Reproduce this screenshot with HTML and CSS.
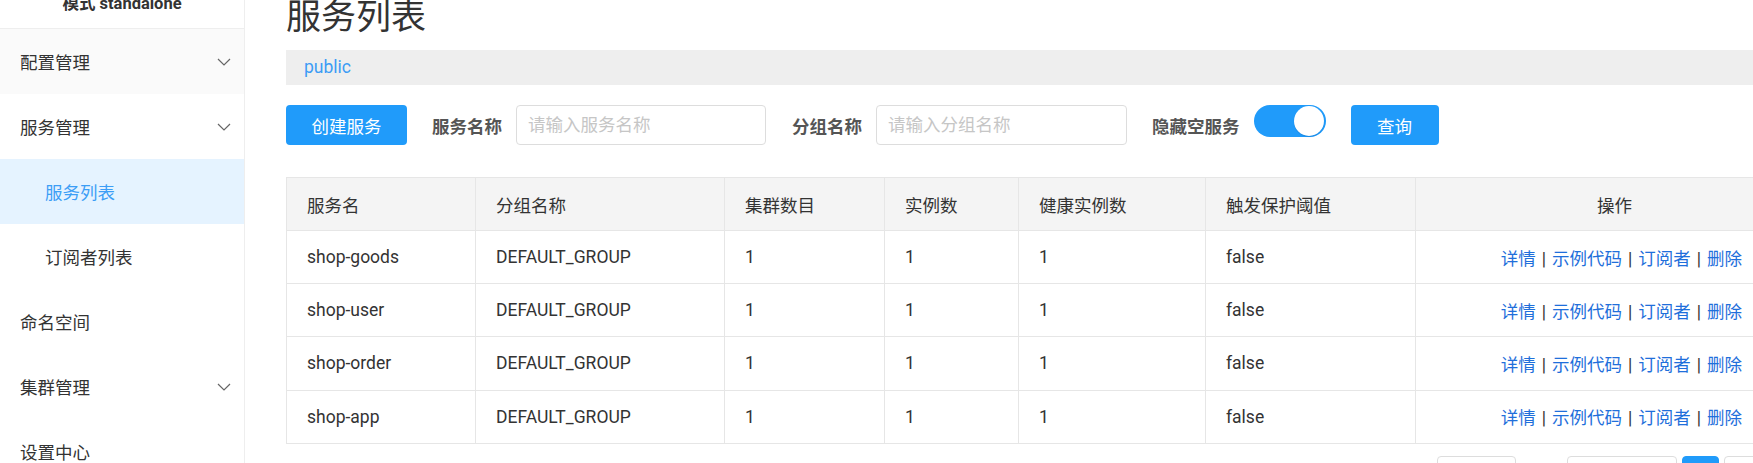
FILE: index.html
```html
<!DOCTYPE html>
<html lang="zh-CN">
<head>
<meta charset="utf-8">
<title>服务列表</title>
<link rel="stylesheet" href="styles.css">
</head>
<body>
<div class="app">
  <aside class="sidebar">
    <div class="brand"><span>模式 standalone</span></div>
    <div class="nav-item hover"><span>配置管理</span><svg class="chev" width="14" height="8" viewBox="0 0 14 8"><path d="M1 1 L7 7 L13 1" fill="none" stroke="#666" stroke-width="1.2"/></svg></div>
    <div class="nav-item"><span>服务管理</span><svg class="chev" width="14" height="8" viewBox="0 0 14 8"><path d="M1 1 L7 7 L13 1" fill="none" stroke="#666" stroke-width="1.2"/></svg></div>
    <div class="nav-item sub active"><span>服务列表</span></div>
    <div class="nav-item sub"><span>订阅者列表</span></div>
    <div class="nav-item"><span>命名空间</span></div>
    <div class="nav-item"><span>集群管理</span><svg class="chev" width="14" height="8" viewBox="0 0 14 8"><path d="M1 1 L7 7 L13 1" fill="none" stroke="#666" stroke-width="1.2"/></svg></div>
    <div class="nav-item"><span>设置中心</span></div>
  </aside>
  <main class="main">
    <h1 class="title">服务列表</h1>
    <div class="ns-bar">public</div>
    <div class="toolbar">
      <button class="btn create">创建服务</button>
      <span class="label">服务名称</span>
      <input class="input in1" placeholder="请输入服务名称">
      <span class="label">分组名称</span>
      <input class="input in2" placeholder="请输入分组名称">
      <span class="label">隐藏空服务</span>
      <span class="switch"><span class="knob"></span></span>
      <button class="btn query">查询</button>
    </div>
    <table class="grid">
      <colgroup>
        <col class="c1"><col class="c2"><col class="c3"><col class="c4"><col class="c5"><col class="c6"><col class="c7">
      </colgroup>
      <thead>
        <tr><th>服务名</th><th>分组名称</th><th>集群数目</th><th>实例数</th><th>健康实例数</th><th>触发保护阈值</th><th class="ops-h">操作</th></tr>
      </thead>
      <tbody>
        <tr><td>shop-goods</td><td>DEFAULT_GROUP</td><td>1</td><td>1</td><td>1</td><td>false</td><td class="ops"><a>详情</a><span class="sep">|</span><a>示例代码</a><span class="sep">|</span><a>订阅者</a><span class="sep">|</span><a>删除</a></td></tr>
        <tr><td>shop-user</td><td>DEFAULT_GROUP</td><td>1</td><td>1</td><td>1</td><td>false</td><td class="ops"><a>详情</a><span class="sep">|</span><a>示例代码</a><span class="sep">|</span><a>订阅者</a><span class="sep">|</span><a>删除</a></td></tr>
        <tr><td>shop-order</td><td>DEFAULT_GROUP</td><td>1</td><td>1</td><td>1</td><td>false</td><td class="ops"><a>详情</a><span class="sep">|</span><a>示例代码</a><span class="sep">|</span><a>订阅者</a><span class="sep">|</span><a>删除</a></td></tr>
        <tr><td>shop-app</td><td>DEFAULT_GROUP</td><td>1</td><td>1</td><td>1</td><td>false</td><td class="ops"><a>详情</a><span class="sep">|</span><a>示例代码</a><span class="sep">|</span><a>订阅者</a><span class="sep">|</span><a>删除</a></td></tr>
      </tbody>
    </table>
    <div class="pager">
      <span class="pbox p1"></span>
      <span class="pbox p2"></span>
      <span class="pbox p3 cur"></span>
      <span class="pbox p4"></span>
    </div>
  </main>
</div>
</body>
</html>
```
FILE: styles.css
```css
html, body {
  margin: 0;
  padding: 0;
}
body {
  width: 1753px;
  height: 463px;
  overflow: hidden;
  background: #fff;
  font-family: Roboto, "Noto Sans CJK SC", sans-serif;
  font-size: 17.5px;
  color: #333;
}
.app {
  display: flex;
  align-items: flex-start;
  width: 1800px;
}
.sidebar {
  flex: none;
  width: 245px;
  height: 463px;
  box-sizing: border-box;
  border-right: 1px solid #eee;
}
.brand {
  height: 28px;
  border-bottom: 1px solid #eee;
  overflow: hidden;
  text-align: center;
  font-weight: bold;
  font-size: 16.5px;
  color: #333;
}
.brand span {
  display: block;
  line-height: 16px;
  margin-top: -4px;
}
.nav-item {
  height: 65px;
  display: flex;
  align-items: center;
  justify-content: space-between;
  padding: 0 13px 0 20px;
  color: #333;
}
.nav-item.sub {
  padding-left: 45px;
}
.nav-item.hover {
  background: #fafafa;
}
.nav-item.active {
  background: #e5f3ff;
  color: #3c9ef6;
}
.chev {
  display: block;
}
.main {
  flex: none;
  width: 1477px;
  padding-left: 41px;
}
.title {
  margin: 0;
  font-size: 35px;
  line-height: 35px;
  font-weight: normal;
  color: #333;
}
.ns-bar {
  margin-top: 15px;
  height: 35px;
  line-height: 35px;
  background: #eee;
  padding-left: 18px;
  color: #3c9cf5;
}
.toolbar {
  margin-top: 20px;
  height: 40px;
  display: flex;
  align-items: center;
}
.btn {
  height: 40px;
  border: none;
  border-radius: 4px;
  background: #209bfa;
  color: #fff;
  font-family: inherit;
  font-size: 17.5px;
  padding: 0;
  flex: none;
}
.btn.create {
  width: 121px;
  margin-right: 25px;
}
.btn.query {
  width: 88px;
}
.label {
  font-weight: bold;
  color: #555;
  margin-right: 14px;
  white-space: nowrap;
}
.input {
  height: 40px;
  box-sizing: border-box;
  border: 1px solid #ddd;
  border-radius: 4px;
  padding: 0 11px;
  font-family: inherit;
  font-size: 17.5px;
  color: #333;
  outline: none;
  flex: none;
}
.input::placeholder {
  color: #c6c6c6;
}
.in1 {
  width: 250px;
  margin-right: 26px;
}
.in2 {
  width: 251px;
  margin-right: 25px;
}
.switch {
  position: relative;
  flex: none;
  width: 72px;
  height: 32px;
  border-radius: 16px;
  background: #209bfa;
  margin-right: 25px;
  align-self: flex-start;
}
.knob {
  position: absolute;
  right: 2px;
  top: 1px;
  width: 30px;
  height: 30px;
  border-radius: 50%;
  background: #fff;
  box-shadow: 0 1px 1px rgba(0, 80, 160, 0.25);
}
.grid {
  margin-top: 32px;
  width: 1477px;
  border-collapse: collapse;
  table-layout: fixed;
}
.c1 { width: 189px; }
.c2 { width: 249px; }
.c3 { width: 160px; }
.c4 { width: 134px; }
.c5 { width: 187px; }
.c6 { width: 210px; }
.c7 { width: 348px; }
.grid th, .grid td {
  border: 1px solid #e6e6e6;
  padding: 0 20px;
  text-align: left;
  font-weight: normal;
  color: #333;
  white-space: nowrap;
}
.grid thead tr {
  height: 53px;
  background: #f4f4f4;
}
.grid tbody tr {
  height: 53.2px;
}
.grid th.ops-h {
  text-align: center;
  padding-left: 70px;
}
.grid td.ops {
  text-align: right;
  padding-right: 21px;
}
.ops a {
  color: #1f6fdb;
  text-decoration: none;
}
.sep {
  color: #333;
  margin: 0 6px;
}
.pager {
  display: flex;
  margin-top: 12px;
  padding-left: 1151px;
}
.pbox {
  flex: none;
  height: 40px;
  box-sizing: border-box;
  border: 1px solid #ddd;
  border-radius: 4px;
  background: #fff;
}
.p1 { width: 79px; margin-right: 51px; }
.p2 { width: 110px; margin-right: 5px; }
.p3 { width: 37px; margin-right: 5px; }
.p4 { width: 37px; }
.pbox.cur {
  background: #209bfa;
  border-color: #209bfa;
}
```
